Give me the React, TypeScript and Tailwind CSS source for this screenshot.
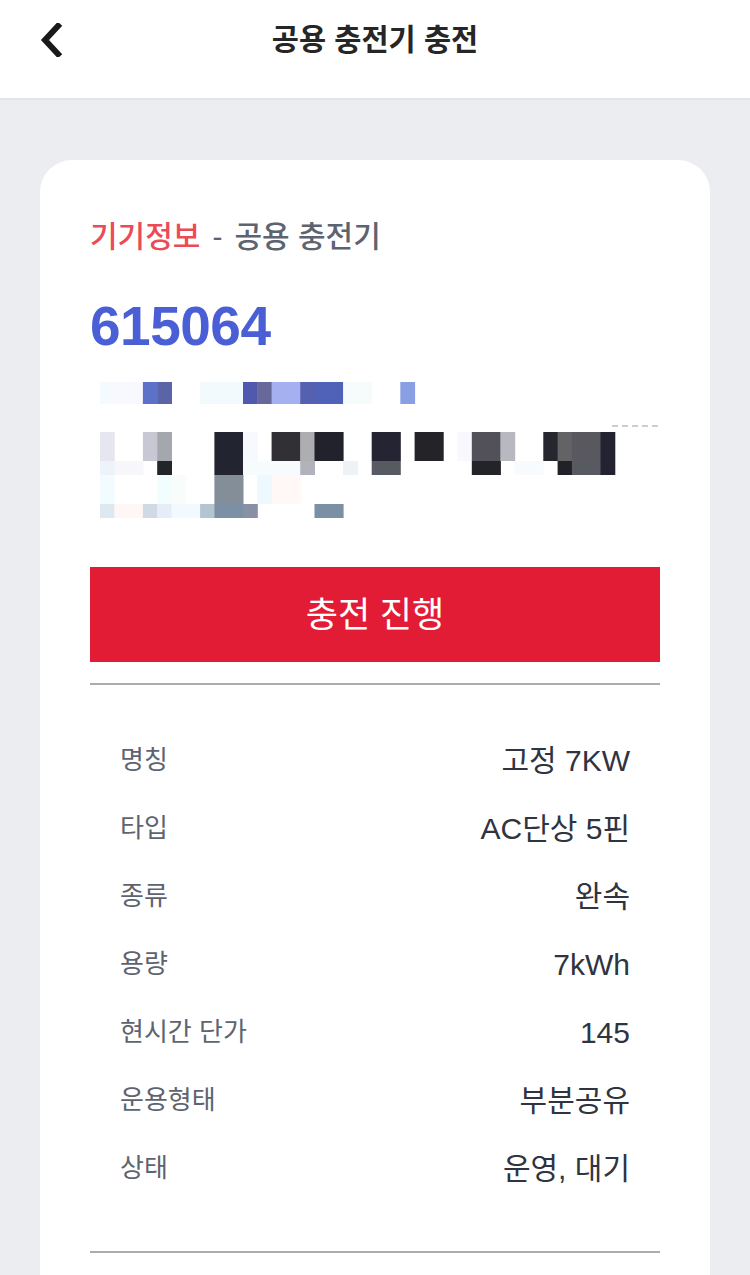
import React from 'react';

type Cell = [number, number, string];
type MosaicRow = { y: number; h: number; cells: Cell[] };

// pixelated (redacted) address block
const mosaic: MosaicRow[] = [
  {
    y: 0,
    h: 22,
    cells: [
      [0, 1, '#f5fafe'], [1, 2, '#f8f9fe'], [3, 1, '#5b72c8'], [4, 1, '#5a64a6'],
      [7, 3, '#f3fafe'], [10, 1, '#5058b0'], [11, 1, '#68699a'], [12, 2, '#a5b0f0'],
      [14, 1, '#5660b0'], [15, 2, '#4f62b7'], [17, 2, '#f6fcfc'], [21, 1, '#8a9ee4'],
    ],
  },
  {
    y: 50,
    h: 29,
    cells: [
      [0, 1, '#e6e6f0'], [3, 1, '#c8c8d4'], [4, 1, '#a4a7ab'], [8, 2, '#222530'],
      [10, 1, '#f8f9fe'], [12, 2, '#303035'], [14, 1, '#aeaeb2'], [15, 2, '#22222c'],
      [19, 2, '#242432'], [22, 2, '#242428'], [25, 1, '#f8f8fe'], [26, 2, '#525058'],
      [28, 1, '#b8b9c0'], [31, 1, '#26262e'], [32, 1, '#636366'], [33, 2, '#58585e'],
      [35, 1, '#222230'],
    ],
  },
  {
    y: 79,
    h: 14,
    cells: [
      [0, 1, '#eef2fb'], [1, 2, '#f6f6fb'], [4, 1, '#22252a'], [8, 2, '#222530'],
      [10, 4, '#f6fbfd'], [14, 1, '#b0b2bc'], [17, 1, '#eef2f6'], [19, 2, '#585a62'],
      [26, 2, '#232428'], [29, 2, '#f8fbfd'], [32, 1, '#202228'], [33, 2, '#585a62'],
      [35, 1, '#222230'],
    ],
  },
  {
    y: 93,
    h: 29,
    cells: [
      [0, 1, '#f2fcff'], [4, 1, '#f2fefe'], [5, 1, '#f8fdfb'], [8, 2, '#838e98'],
      [11, 1, '#eef8ff'], [12, 2, '#fff8f6'],
    ],
  },
  {
    y: 122,
    h: 14,
    cells: [
      [0, 1, '#dde8f0'], [1, 2, '#fff6f6'], [3, 1, '#cfdae4'], [4, 1, '#e6ecf8'],
      [5, 2, '#f2faff'], [7, 1, '#b4c4d0'], [8, 2, '#7b90a4'], [10, 1, '#8890a4'],
      [15, 2, '#7b90a4'],
    ],
  },
];

const CW = 14.3;

function Mosaic() {
  return (
    <svg width="570" height="136" viewBox="0 0 570 136" className="block">
      {mosaic.map((row) =>
        row.cells.map(([c, span, color], i) => (
          <rect
            key={`${row.y}-${i}`}
            x={10 + c * CW}
            y={row.y}
            width={span * CW + 0.5}
            height={row.h}
            fill={color}
          />
        ))
      )}
      <line x1="522" y1="44" x2="570" y2="44" stroke="#bdbdbd" strokeWidth="1.5" strokeDasharray="6 4" />
    </svg>
  );
}

const specs: [string, string][] = [
  ['명칭', '고정 7KW'],
  ['타입', 'AC단상 5핀'],
  ['종류', '완속'],
  ['용량', '7kWh'],
  ['현시간 단가', '145'],
  ['운용형태', '부분공유'],
  ['상태', '운영, 대기'],
];

export default function App() {
  return (
    <div
      className="w-[750px] h-[1275px] overflow-hidden bg-[#ebedf0] flex flex-col"
      style={{ fontFamily: '"Liberation Sans", "Noto Sans CJK KR", sans-serif' }}
    >
      {/* Header */}
      <header className="h-[100px] shrink-0 bg-white border-b-2 border-[#e3e5e8] relative flex items-start justify-center">
        <button className="absolute left-[34px] top-[22px] w-[34px] h-[36px] flex items-center justify-center">
          <svg width="26" height="34" viewBox="0 0 26 34">
            <path d="M20 3 L7 17 L20 31" fill="none" stroke="#1a1a1a" strokeWidth="6" strokeLinecap="square" strokeLinejoin="miter" />
          </svg>
        </button>
        <h1 className="mt-[20px] text-[29.5px] leading-[40px] font-bold text-[#262626]">공용 충전기 충전</h1>
      </header>

      {/* Card */}
      <main className="flex-1 px-[40px] pt-[60px]">
        <div className="bg-white rounded-[32px] h-[1200px] px-[50px] pt-[57px]">
          <div className="text-[30px] leading-[40px] font-medium flex items-center">
            <span className="text-[#ec4a57]">기기정보</span>
            <span className="text-[#5d6470] mx-[12px]">-</span>
            <span className="text-[#5d6470]">공용 충전기</span>
          </div>
          <div className="mt-[39px] text-[55px] leading-[60px] font-bold text-[#4a5fd6] tracking-[-0.5px]">615064</div>

          <div className="mt-[26px]">
            <Mosaic />
          </div>

          <button className="mt-[49px] w-full h-[95px] bg-[#e21c35] text-white text-[35px] leading-[40px] flex items-center justify-center">
            충전 진행
          </button>

          <div className="mt-[21px] h-[2px] bg-[#acacac]" />

          <div className="px-[30px] pt-[55px] flex flex-col gap-[28px]">
            {specs.map(([label, value]) => (
              <div key={label} className="flex items-center justify-between h-[40px]">
                <span className="text-[26px] text-[#5d6470]">{label}</span>
                <span className="text-[30px] text-[#2f3440]">{value}</span>
              </div>
            ))}
          </div>

          <div className="mt-[63px] h-[2px] bg-[#acacac]" />
        </div>
      </main>
    </div>
  );
}
